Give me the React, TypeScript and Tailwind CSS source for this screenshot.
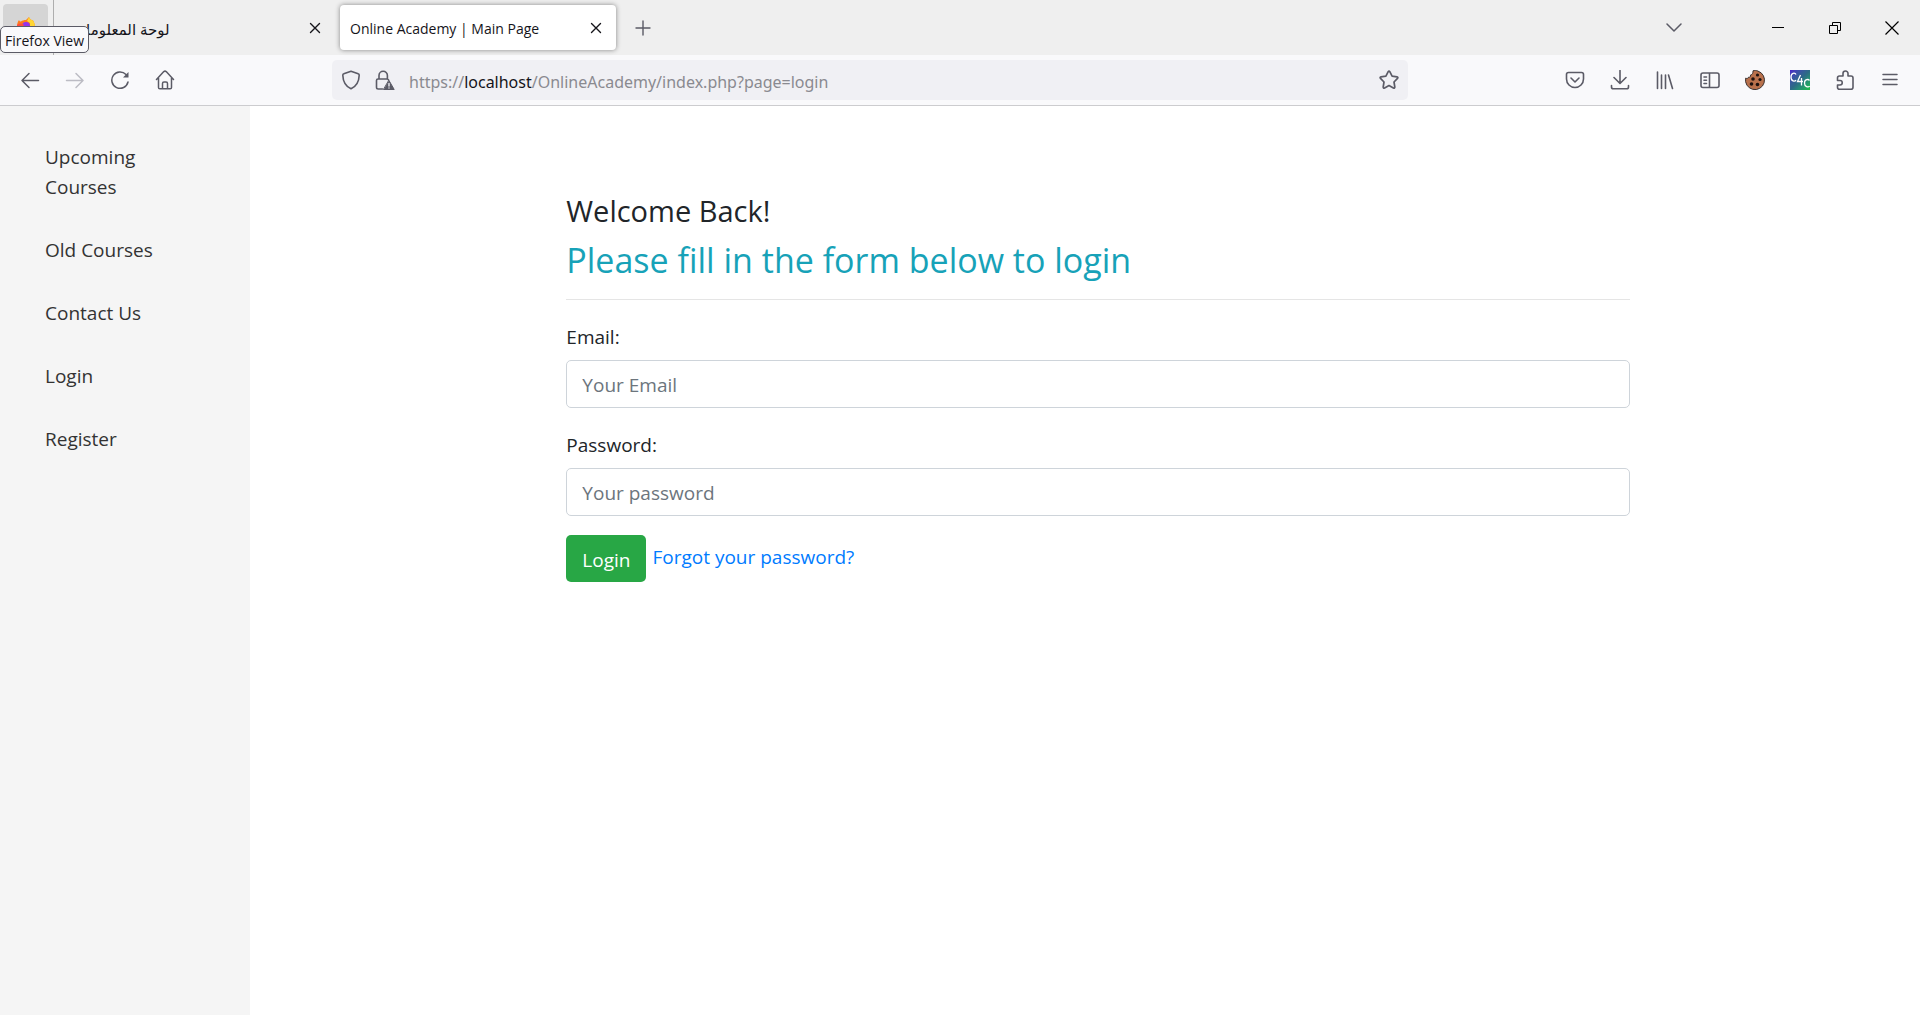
import type { ReactNode } from "react";

const stroke = {
  fill: "none",
  stroke: "currentColor",
  strokeLinecap: "round" as const,
  strokeLinejoin: "round" as const,
};

function Icon({ children, width = 1.5 }: { children: ReactNode; width?: number }) {
  return (
    <svg viewBox="0 0 20 20" className="size-5" aria-hidden="true" {...stroke} strokeWidth={width}>
      {children}
    </svg>
  );
}

function ToolButton({ label, children, disabled = false }: { label: string; children: ReactNode; disabled?: boolean }) {
  return (
    <button
      type="button"
      aria-label={label}
      disabled={disabled}
      className="flex h-10 w-[45px] shrink-0 items-center justify-center rounded text-[#5b5b66] disabled:text-[#bcbcc4]"
    >
      {children}
    </button>
  );
}

function CloseIcon() {
  return (
    <svg viewBox="0 0 12 12" className="size-3" aria-hidden="true" {...stroke} strokeWidth="1.4">
      <path d="M1.500 1.500l9 9M10.500 1.500l-9 9" />
    </svg>
  );
}

function FirefoxLogo() {
  return (
    <svg viewBox="0 0 20 20" className="size-5" aria-hidden="true">
      <path d="M10 3c1-1 2-2 3-3 .5 2 2 3 4 3.500 1 1.500 2 4 2 7a9 9 0 0 1-18 0C1 7 1.500 5 3 3c.5 1 1 1.500 2 1.500C6 3.500 8 3 10 3z" fill="#ff7a1a" />
      <path d="M13 0c.5 2 2 3 4 3.500 1 1.500 2 4 2 7a9 9 0 0 1-5 8V6l-3-2z" fill="#ffd633" />
      <circle cx="10" cy="9" r="4" fill="#9333ea" />
      <path d="M1 8c2-2 5-2 7 0l-2 2-5 2z" fill="#ff4f3a" />
    </svg>
  );
}

function TabBar() {
  return (
    <div className="relative flex h-[55px] bg-[#efefef] text-[#15141a]">
      <div className="flex w-[54px] shrink-0 items-start border-r border-[#aeaeae] pt-1 pl-[3px]">
        <button type="button" aria-label="Firefox View" aria-describedby="view-tip" className="flex h-[45px] w-[45px] items-center justify-center rounded bg-[#d5d5d5]">
          <FirefoxLogo />
        </button>
      </div>
      <div
        id="view-tip"
        role="tooltip"
        className="absolute top-[26px] left-0 z-10 flex h-[27px] items-center rounded-[5px] border border-[#5b5b66] bg-[#f9f9fb] px-1 pt-0.5 text-[14px] whitespace-nowrap"
      >
        Firefox View
      </div>
      <div role="tablist" className="flex">
        <div className="flex w-[286px] items-center justify-between pr-[19px] pl-[18px]">
          <button type="button" role="tab" aria-selected="false" dir="rtl" className="pt-0.5 text-[15px] leading-5">
            لوحة المعلومات
          </button>
          <button type="button" aria-label="Close tab">
            <CloseIcon />
          </button>
        </div>
        <div className="my-[5px] flex w-[276px] items-center justify-between rounded bg-white pr-3.5 pl-2.5 shadow-[0_0_5px_rgba(0,0,0,0.45)]">
          <button type="button" role="tab" aria-selected="true" className="pt-0.5 text-[14px] leading-5 whitespace-nowrap">
            Online Academy | Main Page
          </button>
          <button type="button" aria-label="Close tab">
            <CloseIcon />
          </button>
        </div>
      </div>
      <button type="button" aria-label="Open a new tab" className="flex w-[54px] items-center justify-center text-[#5b5b66]">
        <svg viewBox="0 0 16 16" className="size-4" aria-hidden="true" {...stroke} strokeWidth="1.4">
          <path d="M8 1v14M1 8h14" />
        </svg>
      </button>
      <div className="ml-auto flex">
        <button type="button" aria-label="List all tabs" className="mr-[47px] flex w-[57px] items-center justify-center text-[#5b5b66]">
          <svg viewBox="0 0 16 16" className="size-4" aria-hidden="true" {...stroke} strokeWidth="1.5">
            <path d="M1 4l7 7 7-7" />
          </svg>
        </button>
        <button type="button" aria-label="Minimize" className="flex w-[57px] items-center justify-center">
          <span className="h-px w-3 bg-black" />
        </button>
        <button type="button" aria-label="Restore" className="flex w-[57px] items-center justify-center">
          <svg viewBox="0 0 12 12" className="size-3" aria-hidden="true" fill="none" stroke="#000" strokeWidth="1">
            <path d="M.5 3.500h8v8h-8zM3.500 3.500v-3h8v8h-3" />
          </svg>
        </button>
        <button type="button" aria-label="Close window" className="flex w-[57px] items-center justify-center">
          <svg viewBox="0 0 14 14" className="size-3.5" aria-hidden="true" fill="none" stroke="#000" strokeWidth="1.200">
            <path d="M.5 .5l13 13M13.500 .5l-13 13" />
          </svg>
        </button>
      </div>
    </div>
  );
}

function CookieIcon() {
  return (
    <svg viewBox="0 0 20 20" className="size-5" aria-hidden="true">
      <path
        d="M8 .8c1.500-.5 3.500-.4 5 .3a9.500 9.500 0 1 1-12.300 7c1.300.8 2.600.3 2.800-.9C5 7.500 6 6.500 5.500 5c1.800-.2 2.700-2.200 2.500-4.200z"
        fill="#b9714c"
        stroke="#3b3230"
        strokeWidth="1"
      />
      <g fill="#1d1210">
        <circle cx="12.500" cy="5" r="1.600" />
        <circle cx="8" cy="9" r="1.800" />
        <circle cx="15" cy="9.500" r="1.600" />
        <circle cx="6.500" cy="14" r="1.800" />
        <circle cx="12.500" cy="14.500" r="1.800" />
      </g>
    </svg>
  );
}

function C4CIcon() {
  return (
    <span className="flex size-5 items-center justify-center bg-linear-to-br from-[#4a1fc8] via-[#2c6a86] to-[#1fc03e]">
      <svg viewBox="0 0 20 20" className="size-5" aria-hidden="true" fill="none" stroke="#fff" strokeWidth="1.300">
        <path d="M6 4.500C5 2.500 1 2.500 1 7s4 5 5 3M10.500 5L7.500 11.500H13M11.500 8v7.500M19.500 10.500c-1-1.500-5-1.500-5 2.500s4 4.500 5 3" />
      </svg>
    </span>
  );
}

function NavBar() {
  return (
    <div className="flex h-[51px] items-center border-b border-[#cccccf] bg-[#f9f9fb] pr-2 pl-[7px]">
      <ToolButton label="Back">
        <Icon><path d="M18.500 10.500H2M9 3.500l-7 7 7 7" /></Icon>
      </ToolButton>
      <ToolButton label="Forward" disabled>
        <Icon><path d="M1.500 10.500H18M11 3.500l7 7-7 7" /></Icon>
      </ToolButton>
      <ToolButton label="Reload">
        <Icon>
          <path d="M18 12a8.200 8.200 0 1 1-2-7.500" />
          <path d="M18.500 2v5.500H13z" fill="currentColor" stroke="none" />
        </Icon>
      </ToolButton>
      <ToolButton label="Home">
        <Icon>
          <path d="M1.500 9.500L8.800 1.600q1.200-1 2.400 0L18.500 9.500M3.500 8v9.500q0 1.300 1.300 1.300h10.400q1.300 0 1.300-1.300V8M7.500 18.500v-5q0-1.500 1.500-1.500h2q1.500 0 1.500 1.500v5" />
        </Icon>
      </ToolButton>
      <div className="mr-36 ml-[145px] flex h-10 flex-1 items-center rounded-[5px] bg-[#f0f0f4] px-[9px] text-[#5b5b66]">
        <button type="button" aria-label="Tracking protection">
          <Icon width={1.6}><path d="M10 1.200l7.200 2.500q1 .3 1 1.500c-.2 6-2.600 11-8.200 13.600C4.400 16.200 2 11.200 1.800 5.200q0-1.200 1-1.500z" /></Icon>
        </button>
        <button type="button" aria-label="Connection is not secure" className="ml-3.5">
          <Icon width={1.6}>
            <path d="M7.500 19H3.200Q1.500 19 1.500 17.300V10.500Q1.500 9 3 9h9.500l1 .8M4 9V5.500a4.200 4.200 0 0 1 8.400 0V9" />
            <path d="M14 10.500l5.200 9H8.800z" fill="currentColor" strokeWidth="1" />
            <path d="M14 13.500v2.500M14 18v.1" stroke="#f0f0f4" strokeWidth="1.400" />
          </Icon>
        </button>
        <a href="https://localhost/OnlineAcademy/index.php?page=login" className="ml-3.5 flex-1 pt-[3px] font-['Noto_Sans',sans-serif] text-[16px] whitespace-nowrap text-[#8a8a90]">
          https://<span className="text-[#15141a]">localhost</span>/OnlineAcademy/index.php?page=login
        </a>
        <button type="button" aria-label="Bookmark this page">
          <Icon width={1.7}>
            <path d="M9.200 1.700q.8-1.300 1.600 0l2.300 4.500 4.900.7q1.500.4.5 1.500L15 12l.8 5q0 1.600-1.400.9L10 15.500l-4.400 2.400q-1.400.7-1.400-.9L5 12 1.500 8.400q-1-1.100.5-1.500l4.900-.7z" />
          </Icon>
        </button>
      </div>
      <ToolButton label="Save to Pocket">
        <Icon width={1.6}><path d="M3.500 2.500h13q2 0 2 2v4.500a8.500 8.500 0 0 1-17 0V4.500q0-2 2-2zM6 8l4 4 4-4" /></Icon>
      </ToolButton>
      <ToolButton label="Downloads">
        <Icon width={1.6}><path d="M10 .5v12.500M4 7.500l6 6 6-6M1.500 15.500V17q0 1.800 1.800 1.800h13.400q1.800 0 1.800-1.800v-1.500" /></Icon>
      </ToolButton>
      <ToolButton label="Library">
        <Icon width={1.6}><path d="M2.500 2v16.500M6.500 5v13.500M10.500 5v13.500M13.500 5l4 13.500" /></Icon>
      </ToolButton>
      <ToolButton label="Sidebars">
        <Icon width={1.6}><path d="M3 3h14q2 0 2 2v10.500q0 2-2 2H3q-2 0-2-2V5q0-2 2-2zM9.500 3v14.500M4 7h2.500M4 10.200h2.500M4 13.500h2.500" /></Icon>
      </ToolButton>
      <ToolButton label="Cookie extension"><CookieIcon /></ToolButton>
      <ToolButton label="C4C extension"><C4CIcon /></ToolButton>
      <ToolButton label="Extensions">
        <Icon width={1.6}>
          <path d="M4.500 19.200h11.500q2 0 2-2V8q0-2-2-2h-3V3.500a2.500 2.500 0 0 0-5 0V6h-3.500q-2 0-2 2v2.500H5a2.200 2.200 0 0 1 0 4.500H2.500v2.200q0 2 2 2z" />
        </Icon>
      </ToolButton>
      <ToolButton label="Open application menu">
        <Icon width={1.5}><path d="M3 4.500h14M3 9.500h14M3 14.500h14" /></Icon>
      </ToolButton>
    </div>
  );
}

const links = ["Upcoming Courses", "Old Courses", "Contact Us", "Login", "Register"];

function Field({ id, type, label, placeholder }: { id: string; type: string; label: string; placeholder: string }) {
  return (
    <div className="mb-5">
      <label htmlFor={id} className="mb-2 block pt-0.5 leading-[30px]">
        {label}
      </label>
      <input
        id={id}
        type={type}
        placeholder={placeholder}
        className="h-12 w-full rounded-[5px] border border-[#ced4da] bg-white px-[15px] pt-0.5 placeholder:text-[#6c757d]"
      />
    </div>
  );
}

export default function App() {
  return (
    <div className="flex min-h-screen flex-col bg-white font-['Open_Sans','DejaVu_Sans',sans-serif] text-[#212529]">
      <TabBar />
      <NavBar />
      <div className="flex flex-1 text-[19px]">
        <nav className="flex w-[250px] shrink-0 flex-col gap-[33px] bg-[#f5f5f5] px-[45px] pt-9 leading-[30px] text-[#333]">
          {links.map((text) => (
            <a key={text} href="#" className="block">
              {text}
            </a>
          ))}
        </nav>
        <main className="flex-1">
          <div className="mx-auto w-2/3 pt-[87px] pr-3 pl-[38px]">
            <h4 className="mb-2.5 text-[29px] leading-9">Welcome Back!</h4>
            <h3 className="text-[34px] leading-[42px] text-[#17a2b8]">Please fill in the form below to login</h3>
            <hr className="mt-[18px] mb-5 border-[#e5e5e5]" />
            <form onSubmit={(e) => e.preventDefault()}>
              <Field id="email" type="email" label="Email:" placeholder="Your Email" />
              <Field id="password" type="password" label="Password:" placeholder="Your password" />
              <div className="-mt-px flex items-start gap-1.5">
                <button type="submit" className="h-[47px] rounded-[5px] bg-[#28a745] px-4 pt-[3px] text-white">
                  Login
                </button>
                <a href="#" className="pt-[7px] leading-[30px] text-[#007bff]">
                  Forgot your password?
                </a>
              </div>
            </form>
          </div>
        </main>
      </div>
    </div>
  );
}
